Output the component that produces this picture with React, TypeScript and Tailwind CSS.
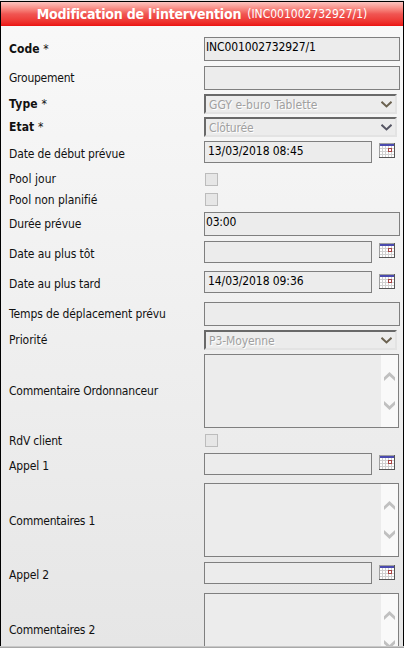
import React from 'react';

function CalendarIcon({ className }: { className: string }) {
  return (
    <svg className={`ml-[7px] h-[15px] w-4 shrink-0 ${className}`} viewBox="0 0 16 15" shapeRendering="crispEdges">
      <rect width="16" height="15" fill="#fff" />
      <path d="M3 3h1v11h-1zM6 3h1v11h-1zM9 3h1v11h-1zM12 3h1v11h-1zM1 5h14v1h-14zM1 8h14v1h-14zM1 11h14v1h-14z" fill="#d0d0d0" />
      <path d="M0 0h16v1h-15v14h-1z" fill="#a0a0a0" />
      <rect x="1" y="1" width="14" height="2" fill="#4a4aae" />
      <path d="M15 0h1v15h-16v-1h15z" fill="#555" />
      <rect x="9.5" y="5.5" width="3" height="3" fill="#fff" stroke="#a84444" />
    </svg>
  );
}

function Chevron({ className }: { className: string }) {
  return (
    <svg className={className} viewBox="0 0 11 9">
      <path d="M0 5.2 5.5 0 11 5.2V9L5.5 4 0 9z" fill="#c0c0c0" />
    </svg>
  );
}

function Input({ className, value, text = '' }: { className: string; value?: string; text?: string }) {
  return (
    <div className={`shrink-0 border border-[#7f7f7f] bg-[#ececec] pt-px leading-4 text-black ${className}`}>
      <span className={text}>{value}</span>
    </div>
  );
}

function Select({ className, value, text, arrow = '#5c5c5c' }: { className: string; value: string; text: string; arrow?: string }) {
  return (
    <div
      className={`flex h-5 w-[193px] shrink-0 justify-between border-2 border-t-[#696969] border-r-[#e3e3e3] border-b-[#e3e3e3] border-l-[#696969] bg-[#ececec] pt-px pr-[3px] pl-[3px] leading-4 text-[#a0a0a0] ${className}`}
    >
      <span className={`[text-shadow:1px_1px_0_#fff] ${text}`}>{value}</span>
      <svg className="mt-[4px] h-[7px] w-[11px]" viewBox="0 0 11 7">
        <path d="M0.5 0.8 5.5 5.4 10.5 0.8" fill="none" stroke={arrow} strokeWidth="2" />
      </svg>
    </div>
  );
}

function Checkbox({ className }: { className: string }) {
  return <div className={`ml-px size-[13px] shrink-0 border border-[#bcbcbc] bg-[#e6e6e6] ${className}`} />;
}

function TextArea({ className }: { className: string }) {
  return (
    <div className={`flex h-[74px] w-[195px] shrink-0 justify-end border border-[#7f7f7f] bg-[#ececec] ${className}`}>
      <div className="flex w-[17px] flex-col items-center gap-5 bg-[#f9f9f9] pt-[17px]">
        <Chevron className="h-[9px] w-[11px]" />
        <Chevron className="h-[9px] w-[11px] rotate-180" />
      </div>
    </div>
  );
}

interface RowProps {
  height: string;
  label: string;
  labelClass: string;
  required?: boolean;
  children: React.ReactNode;
}

function Row({ height, label, labelClass, required, children }: RowProps) {
  return (
    <div className={`flex shrink-0 items-start ${height}`}>
      <div className={`w-[195px] shrink-0 leading-4 whitespace-nowrap ${labelClass}`}>
        {required ? (
          <>
            <b>{label}</b> <span className="tracking-normal">*</span>
          </>
        ) : (
          <span>{label}</span>
        )}
      </div>
      {children}
    </div>
  );
}

export default function App() {
  return (
    <div className="flex h-[648px] w-[404px] flex-col overflow-hidden bg-[#e8e8e8] pt-px font-['DejaVu_Sans_Condensed','DejaVu_Sans',sans-serif] text-[12px] text-[#111] [font-stretch:condensed]">
      <div className="flex h-[645px] shrink-0 flex-col overflow-hidden border-x border-t border-black bg-linear-to-b from-[#f9f9f9] to-[#e6e6e6]">
        <header className="flex h-6 shrink-0 items-center justify-center gap-1.5 bg-linear-to-b from-[#fbc4c0] via-[#f05552] to-[#ec1010] whitespace-nowrap text-white">
          <b className="text-[14px] tracking-[-0.2px]">Modification de l'intervention</b>
          <span>(INC001002732927/1)</span>
        </header>
        <main className="flex flex-col pl-2">
          <Row height="h-[38px]" label="Code" labelClass="mt-[15px] tracking-[0.1px]" required>
            <Input className="mt-[11px] h-6 w-[196px] pl-px" value="INC001002732927/1" text="tracking-[-0.12px]" />
          </Row>
          <Row height="h-7" label="Groupement" labelClass="mt-1.5 tracking-[-0.25px]">
            <Input className="mt-0.5 h-6 w-[196px]" />
          </Row>
          <Row height="h-6" label="Type" labelClass="mt-1 tracking-[0.2px]" required>
            <Select className="mt-0.5" value="GGY e-buro Tablette" text="tracking-[0.06px]" arrow="#6b6250" />
          </Row>
          <Row height="h-[23px]" label="Etat" labelClass="mt-[3px] tracking-[0.1px]" required>
            <Select className="mt-px" value="Clôturée" text="tracking-[-0.15px]" arrow="#565664" />
          </Row>
          <Row height="h-[29px]" label="Date de début prévue" labelClass="mt-[7px] tracking-[-0.14px]">
            <Input className="mt-0.5 h-[22px] w-[168px] pl-[3px]" value="13/03/2018 08:45" text="tracking-[-0.08px]" />
            <CalendarIcon className="mt-1" />
          </Row>
          <Row height="h-[21px]" label="Pool jour" labelClass="mt-[3px] tracking-[0.05px]">
            <Checkbox className="mt-[5px]" />
          </Row>
          <Row height="h-[21px]" label="Pool non planifié" labelClass="mt-[3px] tracking-[-0.05px]">
            <Checkbox className="mt-1" />
          </Row>
          <Row height="h-[29px]" label="Durée prévue" labelClass="mt-1.5 tracking-[-0.12px]">
            <Input className="mt-0.5 h-6 w-[196px] pl-px" value="03:00" text="tracking-[-0.2px]" />
          </Row>
          <Row height="h-[30px]" label="Date au plus tôt" labelClass="mt-[7px] tracking-[-0.1px]">
            <Input className="mt-0.5 h-[22px] w-[168px]" />
            <CalendarIcon className="mt-1" />
          </Row>
          <Row height="h-[30px]" label="Date au plus tard" labelClass="mt-[7px] tracking-[-0.14px]">
            <Input className="mt-0.5 h-[22px] w-[168px] pl-[3px]" value="14/03/2018 09:36" text="tracking-[-0.08px]" />
            <CalendarIcon className="mt-[5px]" />
          </Row>
          <Row height="h-[29px]" label="Temps de déplacement prévu" labelClass="mt-[7px] tracking-[-0.11px]">
            <Input className="mt-[3px] h-6 w-[196px]" />
          </Row>
          <Row height="h-6" label="Priorité" labelClass="mt-1 tracking-[-0.05px]">
            <Select className="mt-0.5" value="P3-Moyenne" text="tracking-[-0.1px]" arrow="#6b6250" />
          </Row>
          <Row height="h-[78px]" label="Commentaire Ordonnanceur" labelClass="mt-[31px] tracking-[-0.21px]">
            <TextArea className="mt-0.5" />
          </Row>
          <Row height="h-[21px]" label="RdV client" labelClass="mt-[3px] tracking-[-0.2px]">
            <Checkbox className="mt-1" />
          </Row>
          <Row height="h-7" label="Appel 1" labelClass="mt-[7px] tracking-[-0.15px]">
            <Input className="mt-0.5 h-[22px] w-[168px]" />
            <CalendarIcon className="mt-1" />
          </Row>
          <Row height="h-20" label="Commentaires 1" labelClass="mt-[34px] tracking-[-0.23px]">
            <TextArea className="mt-1" />
          </Row>
          <Row height="h-[31px]" label="Appel 2" labelClass="mt-2 tracking-[-0.15px]">
            <Input className="mt-[3px] h-[22px] w-[168px]" />
            <CalendarIcon className="mt-1.5" />
          </Row>
          <Row height="h-20" label="Commentaires 2" labelClass="mt-8 tracking-[-0.23px]">
            <TextArea className="mt-[3px]" />
          </Row>
        </main>
      </div>
      <div className="h-0.5 shrink-0 border-t border-[#c8c8c8] bg-[#a8a8a8]" />
    </div>
  );
}
